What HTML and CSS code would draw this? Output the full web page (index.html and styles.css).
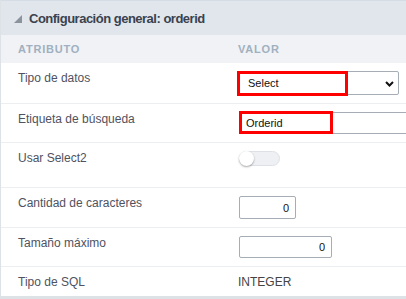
FILE: index.html
```html
<!DOCTYPE html>
<html lang="es">
<head>
  <meta charset="UTF-8" />
  <meta name="viewport" content="width=device-width, initial-scale=1.0"/>
  <title>Configuración general</title>
  <link rel="stylesheet" href="styles.css">
</head>
<body>
  <div class="panel">
    <div class="panel-title">
      <svg class="caret" width="8" height="8" viewBox="0 0 8 8"><polygon points="8,0 8,8 0,8" fill="#8c939c"/></svg>
      Configuración general: orderid
    </div>

    <div class="row head">
      <div>Atributo</div>
      <div>Valor</div>
    </div>

    <div class="row">
      <div class="label">Tipo de datos</div>
      <div class="value">
        <div class="field">
          <select class="select">
            <option>Select</option>
          </select>
          <svg class="chevron" width="9" height="6" viewBox="0 0 9 6"><path d="M1 1 L4.5 4.5 L8 1" fill="none" stroke="#111" stroke-width="2"/></svg>
          <span class="mark mark-select"></span>
        </div>
      </div>
    </div>

    <div class="row">
      <div class="label">Etiqueta de búsqueda</div>
      <div class="value">
        <div class="field">
          <input class="input input-wide" type="text" value="Orderid">
          <span class="mark mark-input"></span>
        </div>
      </div>
    </div>

    <div class="row row-tall">
      <div class="label">Usar Select2</div>
      <div class="value">
        <div class="toggle"><span class="knob"></span></div>
      </div>
    </div>

    <div class="row">
      <div class="label">Cantidad de caracteres</div>
      <div class="value">
        <input class="input input-num input-short" type="text" value="0">
      </div>
    </div>

    <div class="row">
      <div class="label">Tamaño máximo</div>
      <div class="value">
        <input class="input input-num input-mid" type="text" value="0">
      </div>
    </div>

    <div class="row row-last">
      <div class="label">Tipo de SQL</div>
      <div class="value text">INTEGER</div>
    </div>
  </div>
</body>
</html>
```

FILE: styles.css
```css
html, body {
  margin: 0;
  overflow: hidden;
  background: #fff;
}
body {
  font-family: "Liberation Sans", Arial, sans-serif;
  color: #4f5260;
}
.panel {
  overflow: hidden;
  border-left: 1px solid #dde2e7;
  border-bottom: 4px solid #dde2e7;
}
.panel-title {
  display: flex;
  align-items: center;
  gap: 7px;
  height: 34px;
  padding-left: 13px;
  background-color: #e1e6ec;
  border-top: 1px solid #d6dce3;
  color: #39424e;
  font-size: 13px;
  font-weight: bold;
  letter-spacing: -0.5px;
}
.caret {
  margin-top: 1px;
}
.row {
  display: grid;
  grid-template-columns: 220px 1fr;
  padding: 8px 0 8px 17px;
  border-bottom: 1px solid #eceff2;
  font-size: 12px;
}
.row.head {
  height: 28px;
  box-sizing: border-box;
  padding: 0 0 0 17px;
  align-items: center;
  background-color: #f0f2f5;
  border-bottom: none;
  color: #a0b0bf;
  font-size: 11px;
  font-weight: bold;
  text-transform: uppercase;
  letter-spacing: 0.8px;
}
.row-tall {
  padding-bottom: 21px;
}
.row-last {
  border-bottom: none;
  padding-bottom: 7px;
}
.value.text {
  color: #444;
}
.field {
  position: relative;
  display: inline-block;
}
.select {
  appearance: none;
  -webkit-appearance: none;
  display: block;
  width: 161px;
  height: 24px;
  margin: 0;
  padding: 0 0 0 9px;
  border: 1px solid #a6adb5;
  border-radius: 2px;
  background: #fff;
  font-family: "Liberation Sans", Arial, sans-serif;
  font-size: 11px;
  color: #111;
}
.chevron {
  position: absolute;
  left: 147px;
  top: 10px;
}
.input {
  display: block;
  box-sizing: border-box;
  height: 22px;
  margin: 0;
  padding: 0 6px;
  border: 1px solid #a6adb5;
  border-radius: 2px;
  font-family: "Liberation Sans", Arial, sans-serif;
  font-size: 11px;
  color: #111;
}
.input-wide {
  width: 200px;
  margin-left: 1px;
}
.input-num {
  text-align: right;
}
.input-short {
  width: 57px;
  margin-left: 1px;
  height: 23px;
}
.input-mid {
  width: 93px;
  margin-left: 1px;
}
.mark {
  position: absolute;
  box-sizing: border-box;
  border: 3px solid #ff0000;
}
.mark-select {
  left: -1px;
  top: 0;
  width: 111px;
  height: 25px;
}
.mark-input {
  left: 1px;
  top: -1px;
  width: 94px;
  height: 23px;
}
.toggle {
  position: relative;
  width: 41px;
  height: 15px;
  margin-left: 1px;
  box-sizing: border-box;
  background-color: #eef0f3;
  border: 1px solid #dde1e6;
  border-radius: 8px;
}
.knob {
  position: absolute;
  left: -1px;
  top: -1px;
  width: 15px;
  height: 15px;
  border-radius: 50%;
  background: #fff;
  box-shadow: 0 1px 2px rgba(0,0,0,0.35);
}
```
